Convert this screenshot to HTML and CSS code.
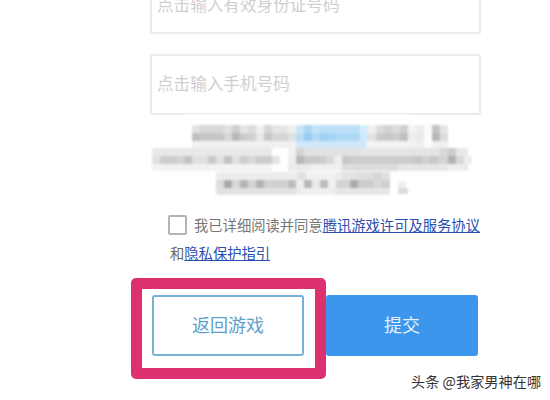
FILE: index.html
```html
<!DOCTYPE html>
<html lang="zh">
<head>
<meta charset="utf-8">
<title>返回游戏</title>
<link rel="stylesheet" href="styles.css">
</head>
<body>
<main class="form">
  <div class="field field-top"><span class="placeholder">点击输入有效身份证号码</span></div>
  <div class="field field-phone"><span class="placeholder">点击输入手机号码</span></div>
  <svg class="mosaic" width="330" height="84" viewBox="150 114 330 84" aria-hidden="true">
    <defs>
      <filter id="soft" x="-5%" y="-10%" width="110%" height="120%"><feGaussianBlur stdDeviation="1.1"/></filter>
    </defs>
    <rect x="184" y="113" width="226" height="2.5" fill="#fff" fill-opacity="0.75"/>
    <g filter="url(#soft)">
      <!-- backing -->
      <rect x="192" y="125" width="256" height="23" fill="#eeeeee"/>
      <rect x="152" y="148" width="120" height="23" fill="#eeeeee"/>
      <rect x="288" y="148" width="180" height="23" fill="#e8e8e8"/>
      <rect x="216" y="172" width="174" height="23" fill="#ececec"/>
      <!-- line 1, light band -->
      <rect x="192" y="125" width="8" height="8" fill="#e2e2e2"/>
      <rect x="200" y="125" width="24" height="8" fill="#d8d8d8"/>
      <rect x="224" y="125" width="8" height="8" fill="#e2e2e2"/>
      <rect x="232" y="125" width="8" height="8" fill="#cfcfcf"/>
      <rect x="240" y="125" width="8" height="8" fill="#e6e6e6"/>
      <rect x="248" y="125" width="8" height="8" fill="#dcdcdc"/>
      <rect x="256" y="125" width="8" height="8" fill="#f0f0f0"/>
      <rect x="264" y="125" width="8" height="8" fill="#d6d6d6"/>
      <rect x="272" y="125" width="16" height="8" fill="#e6e6e6"/>
      <rect x="288" y="125" width="8" height="8" fill="#f0f0f0"/>
      <rect x="296" y="125" width="8" height="8" fill="#c8e4f8"/>
      <rect x="304" y="125" width="8" height="8" fill="#a8d7f5"/>
      <rect x="312" y="125" width="8" height="8" fill="#c4e2f8"/>
      <rect x="320" y="125" width="40" height="8" fill="#bde0f8"/>
      <rect x="360" y="125" width="8" height="8" fill="#d6ecfb"/>
      <rect x="368" y="125" width="8" height="8" fill="#f0f0f0"/>
      <rect x="376" y="125" width="8" height="8" fill="#dddddd"/>
      <rect x="384" y="125" width="8" height="8" fill="#d2d2d2"/>
      <rect x="392" y="125" width="8" height="8" fill="#dddddd"/>
      <rect x="400" y="125" width="8" height="8" fill="#cfcfcf"/>
      <rect x="408" y="125" width="8" height="8" fill="#f4f4f4"/>
      <rect x="416" y="125" width="8" height="8" fill="#ececec"/>
      <rect x="424" y="125" width="8" height="23" fill="#fbfbfb"/>
      <rect x="432" y="125" width="8" height="8" fill="#c4c4c4"/>
      <rect x="440" y="125" width="8" height="8" fill="#e6e6e6"/>
      <!-- line 1, dark band -->
      <rect x="192" y="133" width="8" height="8" fill="#c0c0c0"/>
      <rect x="200" y="133" width="24" height="8" fill="#c6c6c6"/>
      <rect x="224" y="133" width="8" height="8" fill="#d6d6d6"/>
      <rect x="232" y="133" width="8" height="8" fill="#b8b8b8"/>
      <rect x="240" y="133" width="8" height="8" fill="#cccccc"/>
      <rect x="248" y="133" width="8" height="8" fill="#d2d2d2"/>
      <rect x="256" y="133" width="8" height="8" fill="#e8e8e8"/>
      <rect x="264" y="133" width="8" height="8" fill="#c6c6c6"/>
      <rect x="272" y="133" width="16" height="8" fill="#d6d6d6"/>
      <rect x="288" y="133" width="8" height="8" fill="#e0e0e0"/>
      <rect x="296" y="133" width="8" height="8" fill="#b8ddf6"/>
      <rect x="304" y="133" width="8" height="8" fill="#98cef2"/>
      <rect x="312" y="133" width="8" height="8" fill="#b4dbf6"/>
      <rect x="320" y="133" width="8" height="8" fill="#9ed1f3"/>
      <rect x="328" y="133" width="8" height="8" fill="#a6d5f4"/>
      <rect x="336" y="133" width="24" height="8" fill="#aed9f6"/>
      <rect x="360" y="133" width="8" height="8" fill="#cfe8fa"/>
      <rect x="368" y="133" width="8" height="8" fill="#e2e2e2"/>
      <rect x="376" y="133" width="8" height="8" fill="#cccccc"/>
      <rect x="384" y="133" width="8" height="8" fill="#c8c8c8"/>
      <rect x="392" y="133" width="8" height="8" fill="#cccccc"/>
      <rect x="400" y="133" width="8" height="8" fill="#c0c0c0"/>
      <rect x="408" y="133" width="8" height="8" fill="#eeeeee"/>
      <rect x="416" y="133" width="8" height="8" fill="#e8e8e8"/>
      <rect x="432" y="133" width="8" height="8" fill="#b8b8b8"/>
      <rect x="440" y="133" width="8" height="8" fill="#dddddd"/>
      <!-- line 1, fade -->
      <rect x="192" y="141" width="104" height="7" fill="#f1f1f1"/>
      <rect x="296" y="141" width="70" height="7" fill="#cfe8fa"/>
      <rect x="366" y="141" width="50" height="7" fill="#f3f3f3"/>
      <rect x="432" y="141" width="16" height="7" fill="#f0f0f0"/>
      <!-- line 2, light band -->
      <rect x="152" y="148" width="120" height="8" fill="#e8e8e8"/>
      <rect x="288" y="148" width="8" height="8" fill="#f0f0f0"/>
      <rect x="296" y="148" width="8" height="8" fill="#d4d4d4"/>
      <rect x="304" y="148" width="56" height="8" fill="#e2e2e2"/>
      <rect x="360" y="148" width="40" height="8" fill="#e6e6e6"/>
      <rect x="400" y="148" width="40" height="8" fill="#e4e4e4"/>
      <rect x="440" y="148" width="8" height="8" fill="#d8d8d8"/>
      <rect x="448" y="148" width="8" height="8" fill="#cccccc"/>
      <rect x="456" y="148" width="8" height="8" fill="#e8e8e8"/>
      <!-- line 2, dark band -->
      <rect x="152" y="156" width="8" height="8" fill="#e0e0e0"/>
      <rect x="160" y="156" width="16" height="8" fill="#cccccc"/>
      <rect x="176" y="156" width="8" height="8" fill="#d4d4d4"/>
      <rect x="184" y="156" width="8" height="8" fill="#c2c2c2"/>
      <rect x="192" y="156" width="16" height="8" fill="#e0e0e0"/>
      <rect x="208" y="156" width="8" height="8" fill="#c8c8c8"/>
      <rect x="216" y="156" width="8" height="8" fill="#e0e0e0"/>
      <rect x="224" y="156" width="8" height="8" fill="#c2c2c2"/>
      <rect x="232" y="156" width="8" height="8" fill="#e0e0e0"/>
      <rect x="240" y="156" width="8" height="8" fill="#cccccc"/>
      <rect x="248" y="156" width="8" height="8" fill="#d8d8d8"/>
      <rect x="256" y="156" width="16" height="8" fill="#cccccc"/>
      <rect x="272" y="156" width="8" height="8" fill="#e4e4e4"/>
      <rect x="288" y="156" width="8" height="8" fill="#eeeeee"/>
      <rect x="296" y="156" width="8" height="8" fill="#b8b8b8"/>
      <rect x="304" y="156" width="14" height="8" fill="#c8c8c8"/>
      <rect x="318" y="156" width="8" height="8" fill="#cccccc"/>
      <rect x="326" y="156" width="8" height="8" fill="#d8d8d8"/>
      <rect x="334" y="156" width="8" height="8" fill="#eeeeee"/>
      <rect x="342" y="156" width="8" height="8" fill="#c6c6c6"/>
      <rect x="350" y="156" width="64" height="8" fill="#cccccc"/>
      <rect x="414" y="156" width="8" height="8" fill="#c6c6c6"/>
      <rect x="422" y="156" width="8" height="8" fill="#d0d0d0"/>
      <rect x="430" y="156" width="8" height="8" fill="#c8c8c8"/>
      <rect x="438" y="156" width="10" height="8" fill="#d4d4d4"/>
      <rect x="448" y="156" width="8" height="8" fill="#b2b2b2"/>
      <rect x="456" y="156" width="8" height="8" fill="#d8d8d8"/>
      <rect x="464" y="156" width="8" height="8" fill="#eeeeee"/>
      <!-- line 2, fade -->
      <rect x="152" y="164" width="56" height="7" fill="#f2f2f2"/>
      <rect x="208" y="164" width="64" height="7" fill="#f3f3f3"/>
      <rect x="288" y="164" width="14" height="7" fill="#eaeaea"/>
      <rect x="310" y="164" width="32" height="7" fill="#f0f0f0"/>
      <rect x="342" y="164" width="56" height="7" fill="#dcdcdc"/>
      <rect x="398" y="164" width="50" height="7" fill="#e6e6e6"/>
      <rect x="448" y="164" width="16" height="7" fill="#eeeeee"/>
      <!-- line 3, light band -->
      <rect x="222" y="172" width="76" height="8" fill="#ececec"/>
      <rect x="298" y="172" width="8" height="8" fill="#e0e0e0"/>
      <rect x="306" y="172" width="30" height="8" fill="#f0f0f0"/>
      <rect x="342" y="172" width="16" height="8" fill="#e2e2e2"/>
      <rect x="358" y="172" width="16" height="8" fill="#dddddd"/>
      <rect x="374" y="172" width="8" height="8" fill="#d6d6d6"/>
      <rect x="382" y="172" width="8" height="8" fill="#e0e0e0"/>
      <!-- line 3, dark band -->
      <rect x="216" y="180" width="8" height="8" fill="#dddddd"/>
      <rect x="224" y="180" width="8" height="8" fill="#a8a8a8"/>
      <rect x="232" y="180" width="8" height="8" fill="#d8d8d8"/>
      <rect x="240" y="180" width="8" height="8" fill="#b4b4b4"/>
      <rect x="248" y="180" width="8" height="8" fill="#d4d4d4"/>
      <rect x="256" y="180" width="8" height="8" fill="#b2b2b2"/>
      <rect x="264" y="180" width="24" height="8" fill="#d0d0d0"/>
      <rect x="288" y="180" width="8" height="8" fill="#bcbcbc"/>
      <rect x="296" y="180" width="8" height="8" fill="#eeeeee"/>
      <rect x="304" y="180" width="8" height="8" fill="#b8b8b8"/>
      <rect x="312" y="180" width="8" height="8" fill="#eaeaea"/>
      <rect x="320" y="180" width="8" height="8" fill="#bcbcbc"/>
      <rect x="328" y="180" width="8" height="8" fill="#f0f0f0"/>
      <rect x="336" y="180" width="14" height="8" fill="#d4d4d4"/>
      <rect x="350" y="180" width="8" height="8" fill="#aaaaaa"/>
      <rect x="358" y="180" width="16" height="8" fill="#cccccc"/>
      <rect x="374" y="180" width="8" height="8" fill="#d8d8d8"/>
      <rect x="382" y="180" width="8" height="8" fill="#cfcfcf"/>
      <rect x="398" y="182" width="8" height="6" fill="#eeeeee"/>
      <!-- line 3, fade -->
      <rect x="216" y="188" width="80" height="7" fill="#e2e2e2"/>
      <rect x="302" y="188" width="30" height="7" fill="#f0f0f0"/>
      <rect x="336" y="188" width="54" height="7" fill="#e6e6e6"/>
      <rect x="398" y="188" width="10" height="6" fill="#dcdcdc"/>
    </g>
  </svg>
  <div class="consent">
    <div class="consent-line">
      <span class="checkbox"></span>
      <span class="consent-text">我已详细阅读并同意<a class="link" href="#">腾讯游戏许可及服务协议</a></span>
    </div>
    <div class="consent-second">和<a class="link" href="#">隐私保护指引</a></div>
  </div>
  <div class="actions">
    <button class="btn btn-back" type="button">返回游戏<span class="highlight"></span></button>
    <button class="btn btn-submit" type="button">提交</button>
  </div>
</main>
<div class="watermark">头条 @我家男神在哪</div>
</body>
</html>
```

FILE: styles.css
```css
html, body {
  margin: 0;
  height: 100%;
  overflow: hidden;
  background: #fff;
}
body {
  position: relative;
  font-family: "Noto Sans CJK SC", "Noto Sans", sans-serif;
}
.form {
  width: 331px;
  margin-left: 150px;
}
.field {
  box-sizing: border-box;
  width: 331px;
  border: 2px solid #ebebeb;
  border-radius: 2px;
  padding-left: 5px;
  display: flex;
  align-items: center;
}
.field-top {
  height: 34px;
  border-top: 0;
  border-radius: 0 0 2px 2px;
  align-items: flex-start;
}
.field-phone {
  height: 61px;
  margin-top: 20px;
  padding-bottom: 2px;
}
.placeholder {
  font-size: 16.6px;
  line-height: 1;
  color: #d0d0d0;
  white-space: nowrap;
}
.field-top .placeholder {
  margin-top: -4px;
}
.mosaic {
  display: block;
  margin-top: -1px;
}
.consent {
  margin-top: 17px;
  padding-left: 18px;
  font-size: 14.3px;
  line-height: 20px;
  color: #777;
}
.consent-line {
  display: flex;
  align-items: center;
  gap: 6px;
}
.checkbox {
  box-sizing: border-box;
  width: 19px;
  height: 20px;
  border: 2px solid #b4b4b4;
  border-radius: 2px;
  flex: none;
}
.consent-text {
  white-space: nowrap;
  margin-left: 1px;
}
.consent-second {
  margin-top: 8px;
  padding-left: 2px;
  color: #6f6850;
}
.link {
  color: #2a4fb0;
  text-decoration: underline;
}
.actions {
  display: flex;
  gap: 22px;
  margin-top: 32px;
  padding-left: 2px;
}
.btn {
  position: relative;
  width: 152px;
  height: 61px;
  box-sizing: border-box;
  border-radius: 3px;
  font-family: inherit;
  font-size: 18px;
  padding: 0 0 3px;
}
.btn-back {
  background: #fff;
  border: 2px solid #78b2d6;
  color: #5f9fcb;
}
.btn-submit {
  background: #3b96ec;
  border: 0;
  color: #e4f1fc;
}
.highlight {
  position: absolute;
  left: -23px;
  top: -19px;
  width: 195px;
  height: 101px;
  box-sizing: border-box;
  border: 11px solid #dc3070;
  border-radius: 5px;
}
.watermark {
  position: absolute;
  left: 411px;
  top: 370px;
  font-size: 14.2px;
  line-height: 22px;
  color: #333;
  white-space: nowrap;
  text-shadow: 0 0 2px #fff;
}
```
